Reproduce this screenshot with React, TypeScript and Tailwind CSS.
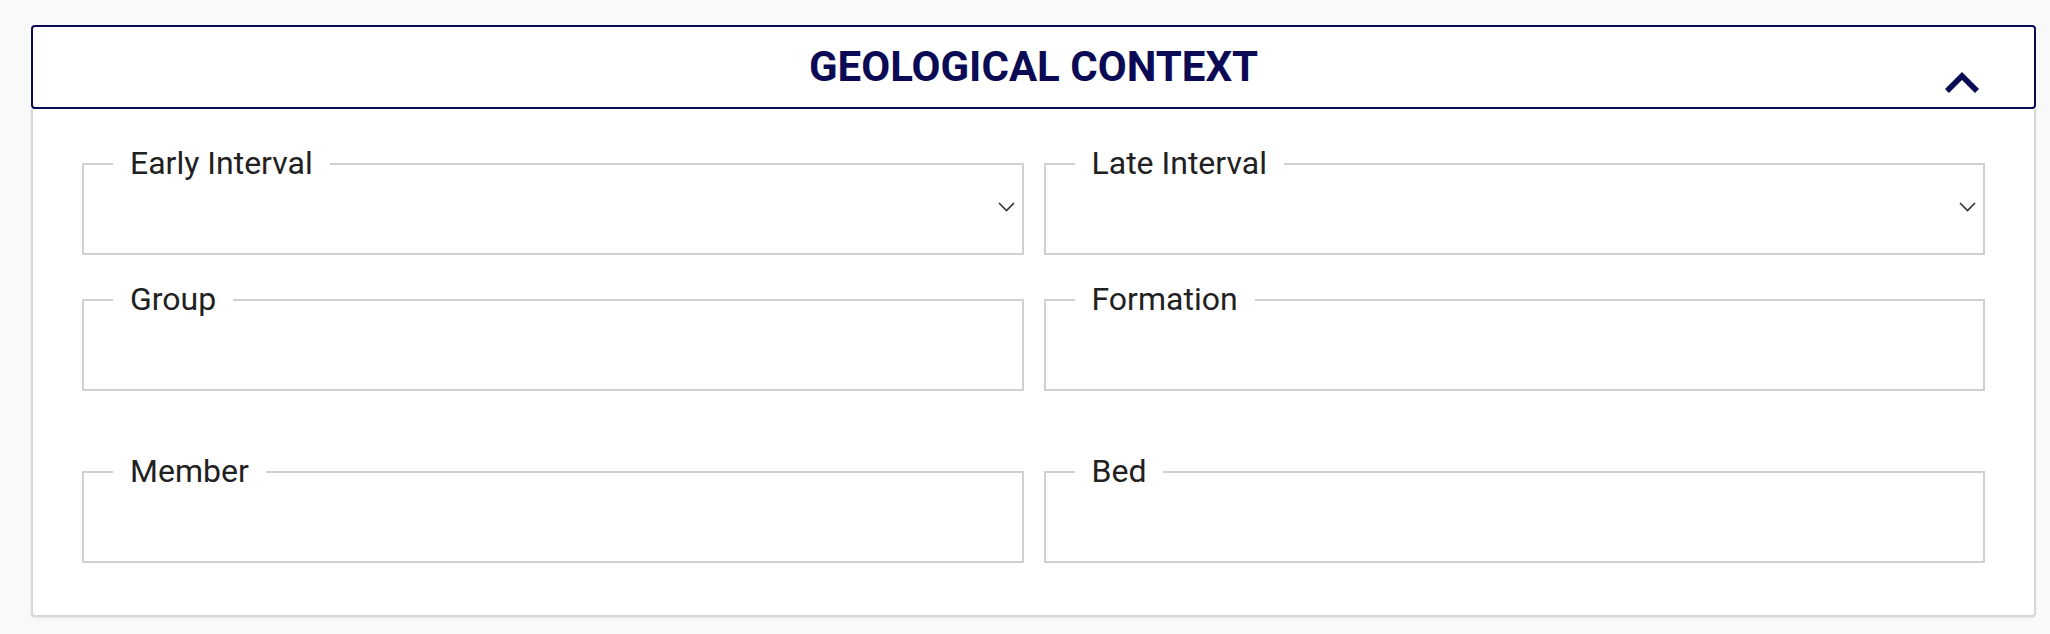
import { useState } from "react";

const fields = [
    { label: "Early Interval", select: true },
    { label: "Late Interval", select: true },
    { label: "Group" },
    { label: "Formation" },
    { label: "Member" },
    { label: "Bed" },
];

const Field = ({ label, select }: { label: string; select?: boolean }) => {
    return (
        <div className="relative h-[92px] border-2 border-[#d0d0d0] bg-white">
            {/* label sits on the top border, like an outlined input */}
            <span className="absolute left-[29px] top-[-20px] bg-white px-[17px] text-[32px] leading-[36px] text-[#212121]">
                {label}
            </span>
            {select && (
                <svg
                    className="absolute right-[7px] top-[37px]"
                    width="17"
                    height="10"
                    viewBox="0 0 17 10"
                    fill="none"
                >
                    <polyline points="1,1 8.5,8.5 16,1" stroke="#333" strokeWidth="1.6" />
                </svg>
            )}
        </div>
    );
};

const App = () => {
    const [open, setOpen] = useState(true);

    return (
        <div
            className="min-h-[634px] bg-[#f9f9f9] pl-[31px] pr-[14px] pt-[25px]"
            style={{ fontFamily: "Roboto, 'Liberation Sans', sans-serif" }}
        >
            {/* Header */}
            <div
                className="relative flex h-[84px] cursor-pointer items-center justify-center rounded-[4px] border-2 border-[#0b0b55] bg-white"
                onClick={() => setOpen(!open)}
            >
                <h2 className="text-[42px] font-bold uppercase leading-none text-[#0b0b55]">
                    Geological Context
                </h2>
                <svg
                    className="absolute right-[55px] top-[45px]"
                    width="34"
                    height="21"
                    viewBox="6 8 12 7.41"
                    fill="#0b0b55"
                >
                    <path d="M12 8l-6 6 1.41 1.41L12 10.83l4.59 4.58L18 14z" />
                </svg>
            </div>

            {/* Body */}
            {open && (
                <div className="grid grid-cols-2 gap-x-[20px] rounded-b-[4px] border-2 border-t-0 border-[#d6d6d6] bg-white px-[49px] pb-[52px] pt-[54px] shadow-[0_1px_2px_rgba(0,0,0,0.08)]">
                    <Field {...fields[0]} />
                    <Field {...fields[1]} />
                    <div className="col-span-2 h-[44px]" />
                    <Field {...fields[2]} />
                    <Field {...fields[3]} />
                    <div className="col-span-2 h-[80px]" />
                    <Field {...fields[4]} />
                    <Field {...fields[5]} />
                </div>
            )}
        </div>
    );
};

export default App;
